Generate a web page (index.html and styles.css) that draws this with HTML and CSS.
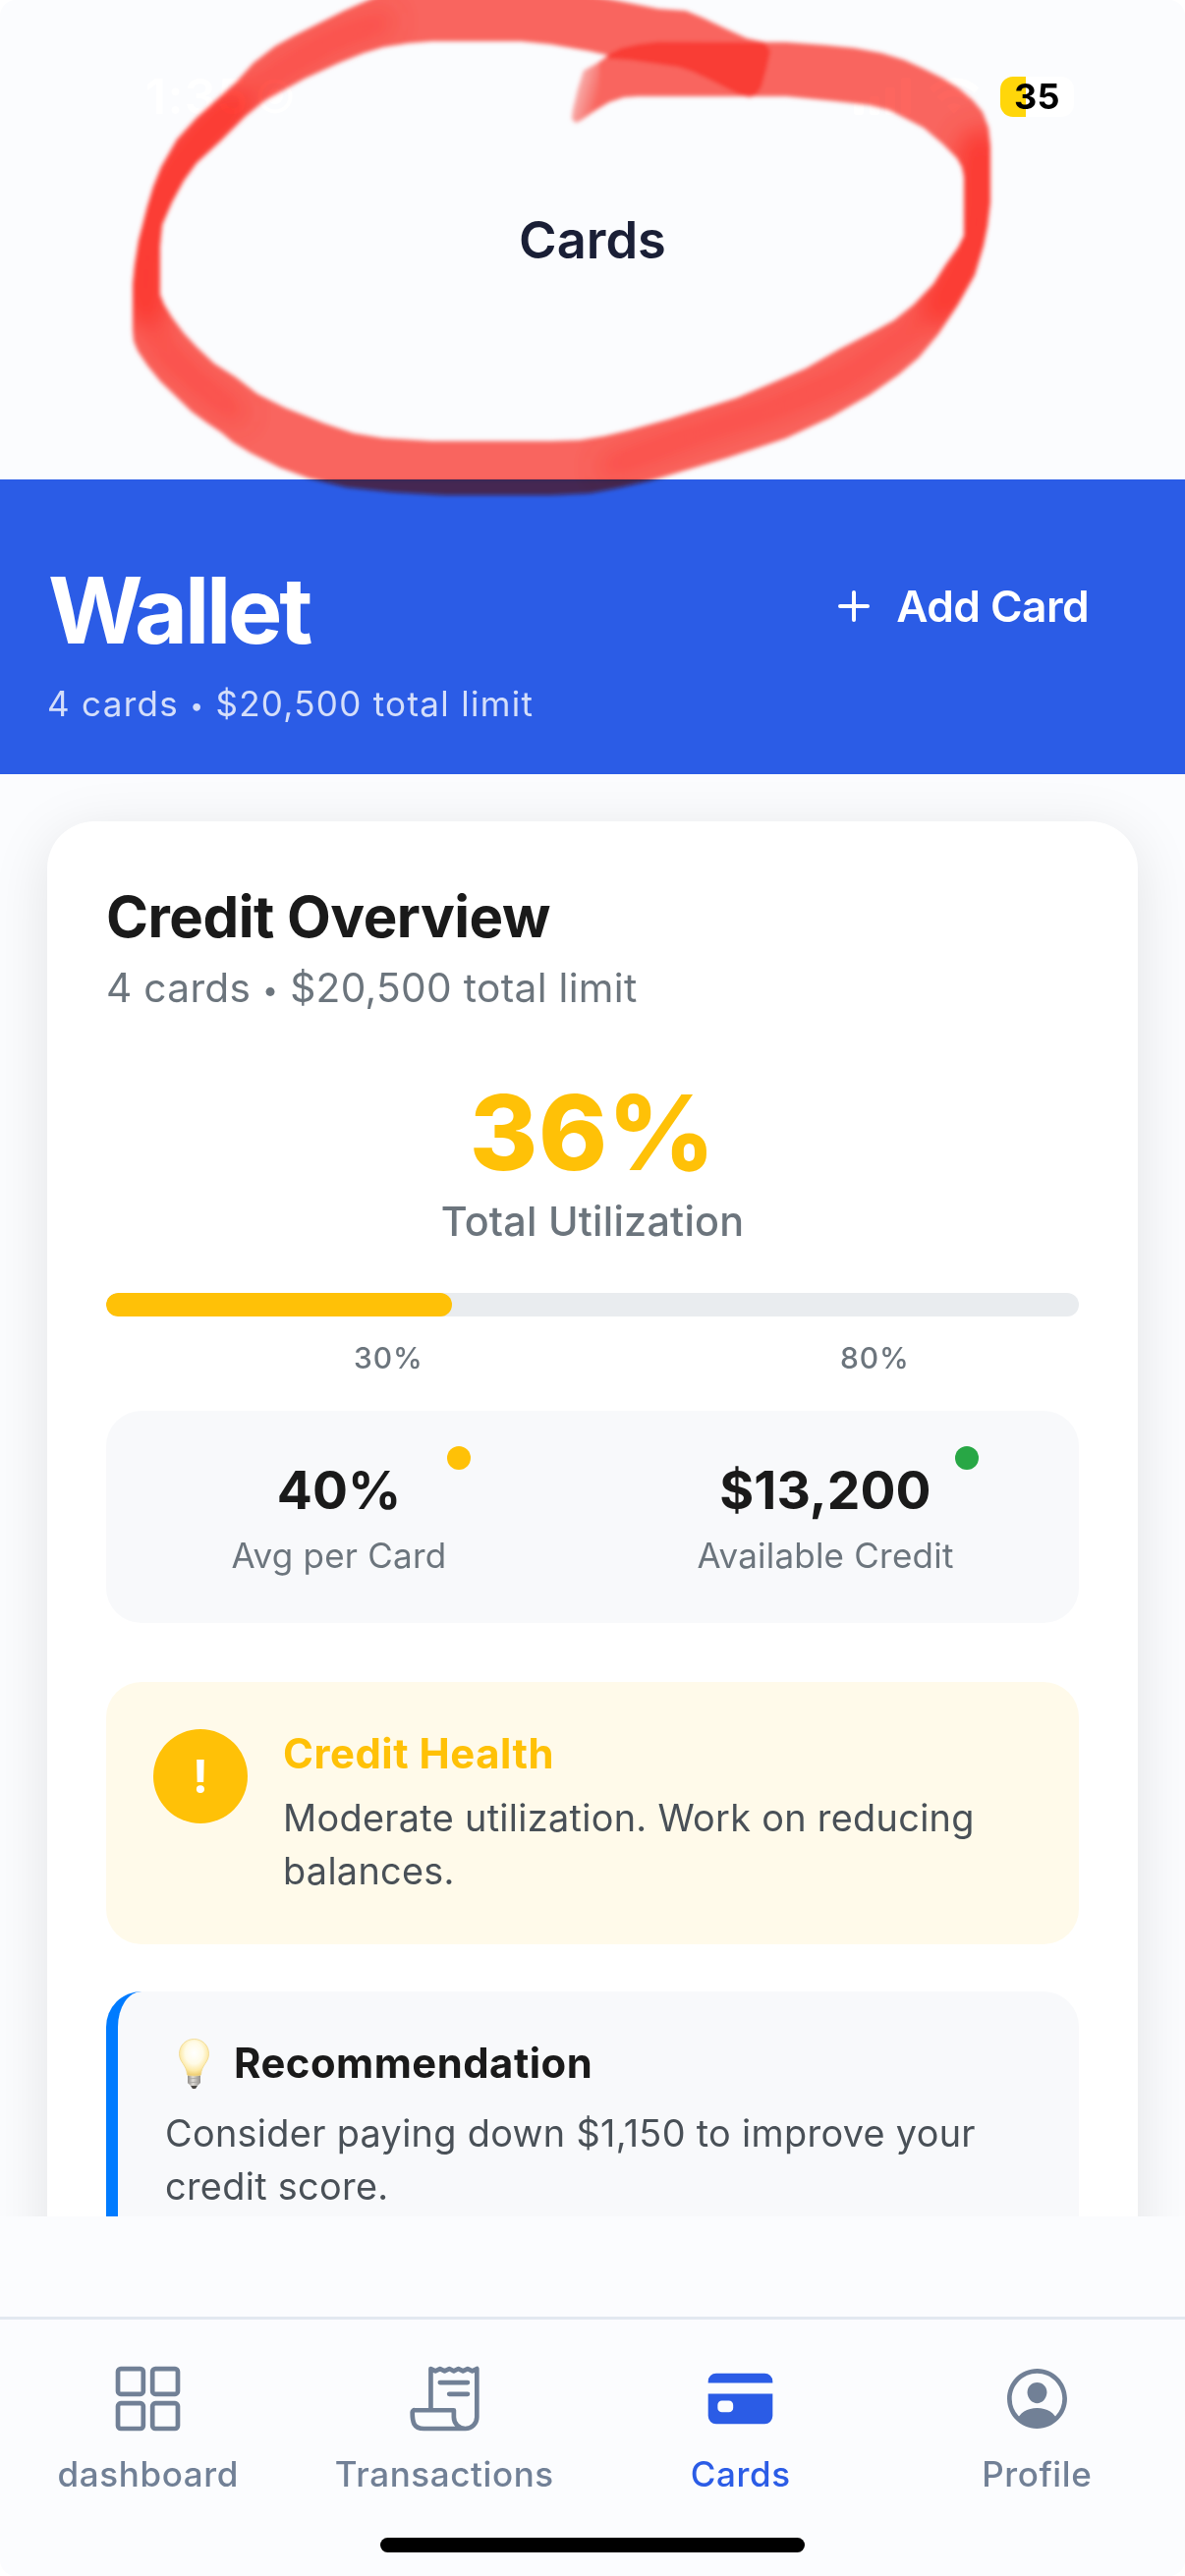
FILE: index.html
```html
<!DOCTYPE html>
<html lang="en">
<head>
<meta charset="utf-8">
<title>Wallet</title>
<link rel="stylesheet" href="styles.css">
</head>
<body>
<div class="screen">
  <header class="top">
    <div class="status">
      <div class="status-left">
        <span class="time">1:35</span>
        <svg class="focus" viewBox="0 0 36 36"><circle cx="18" cy="18" r="15.5" fill="none" stroke="#fff" stroke-width="4"/><circle cx="18" cy="18" r="8" fill="#fff"/></svg>
      </div>
      <div class="status-right">
        <svg class="signal" viewBox="0 0 58 38" fill="#fff"><rect x="0" y="25" width="10" height="13" rx="3"/><rect x="16" y="19" width="10" height="19" rx="3"/><rect x="32" y="10" width="10" height="28" rx="3"/><rect x="48" y="0" width="10" height="38" rx="3"/></svg>
        <svg class="wifi" viewBox="0 0 52 38" fill="none" stroke="#fff" stroke-width="7"><path d="M3 13a33 33 0 0 1 46 0M11 22a21 21 0 0 1 30 0"/><path d="M26 37l-7-8a10 10 0 0 1 14 0z" fill="#fff" stroke="none"/></svg>
        <div class="battery"><span class="battery-level">35</span></div>
      </div>
    </div>
    <h1 class="nav-title">Cards</h1>
  </header>

  <section class="wallet">
    <div>
      <h2 class="wallet-title">Wallet</h2>
      <p class="wallet-sub">4 cards <span class="bullet">•</span> $20,500 total limit</p>
    </div>
    <div class="add">
      <svg class="plus" viewBox="0 0 32 32" stroke="#fff" stroke-width="4" stroke-linecap="round"><path d="M16 2v28M2 16h28"/></svg>
      <span>Add Card</span>
    </div>
  </section>

  <main class="scroll">
    <section class="card">
      <h3 class="card-title">Credit Overview</h3>
      <p class="card-sub">4 cards <span class="bullet">•</span> $20,500 total limit</p>
      <div class="util">36%</div>
      <div class="util-label">Total Utilization</div>
      <div class="bar"><div class="bar-fill" style="width:35.6%"></div></div>
      <div class="marks"><span>30%</span><span>80%</span></div>

      <div class="stats">
        <div class="stat"><div class="stat-body"><i class="dot dot-warn"></i><div class="stat-value">40%</div><div class="stat-label">Avg per Card</div></div></div>
        <div class="stat"><div class="stat-body"><i class="dot dot-good"></i><div class="stat-value">$13,200</div><div class="stat-label">Available Credit</div></div></div>
      </div>

      <div class="health">
        <div class="health-icon">!</div>
        <div>
          <div class="health-title">Credit Health</div>
          <p class="copy health-copy">Moderate utilization. Work on reducing<br>balances.</p>
        </div>
      </div>

      <div class="rec">
        <div class="rec-title">
          <svg class="bulb" viewBox="0 0 58 51">
            <defs>
              <radialGradient id="glass" cx=".5" cy=".38" r=".6"><stop offset="0" stop-color="#fff"/><stop offset=".5" stop-color="#fffbe6"/><stop offset=".8" stop-color="#fdeaa8"/><stop offset="1" stop-color="#f0cf74"/></radialGradient>
              <linearGradient id="screw"><stop offset="0" stop-color="#8f8c88"/><stop offset=".4" stop-color="#dedbd6"/><stop offset="1" stop-color="#8f8c88"/></linearGradient>
            </defs>
            <path d="M23 37h13v8l-3 3h-7l-3-3z" fill="url(#screw)"/>
            <path d="M23 41l13-1M23 45l12-1" stroke="#a5a29e" stroke-width=".8"/>
            <path d="M26 48h7l-2 3h-3z" fill="#4b4845"/>
            <path d="M29.500 .5C21 .5 14.500 7 14.500 15.500c0 9 7.500 11 8 21.500 3 1.200 11 1.200 14 0 .5-10.500 8-12.500 8-21.500C44.500 7 38 .5 29.500 .5z" fill="url(#glass)" stroke="#efd78c" stroke-width=".8"/>
          </svg>
          <span>Recommendation</span>
        </div>
        <p class="copy rec-copy">Consider paying down $1,150 to improve your<br>credit score.</p>
      </div>
    </section>
  </main>

  <nav class="tabs">
    <div class="tab">
      <svg class="tab-icon" viewBox="0 0 512 512" fill="none" stroke="currentColor" stroke-width="32" stroke-linejoin="round"><rect x="48" y="48" width="176" height="176" rx="20"/><rect x="288" y="48" width="176" height="176" rx="20"/><rect x="48" y="288" width="176" height="176" rx="20"/><rect x="288" y="288" width="176" height="176" rx="20"/></svg>
      <span>dashboard</span>
    </div>
    <div class="tab">
      <svg class="tab-icon" viewBox="0 0 512 512" fill="none" stroke="currentColor" stroke-width="32" stroke-linejoin="round"><path d="M160 336V48l32 16 32-16 31.940 16 32.370-16L320 64l31.790-16 31.930 16L416 48l32.010 16L480 48v336a80 80 0 0 1-80 80 80 80 0 0 1-80-80v-48H48a15.860 15.860 0 0 0-16 16c0 64 6.740 112 80 112h288"/><path d="M224 144h192M288 224h128" stroke-linecap="round"/></svg>
      <span>Transactions</span>
    </div>
    <div class="tab tab-active">
      <svg class="tab-icon" viewBox="0 0 512 512" fill="currentColor"><path d="M32 376a56 56 0 0 0 56 56h336a56 56 0 0 0 56-56V222H32zm66-76a30 30 0 0 1 30-30h48a30 30 0 0 1 30 30v20a30 30 0 0 1-30 30h-48a30 30 0 0 1-30-30zM424 80H88a56 56 0 0 0-56 56v10h448v-10a56 56 0 0 0-56-56z"/></svg>
      <span>Cards</span>
    </div>
    <div class="tab">
      <svg class="tab-icon" viewBox="0 0 512 512" fill="currentColor"><path d="M258.900 48C141.920 46.420 46.420 141.920 48 258.900c1.560 112.190 92.910 203.540 205.100 205.100 117 1.600 212.480-93.900 210.880-210.880C462.440 140.910 371.090 49.560 258.900 48zm126.420 327.250a4 4 0 0 1-6.140-.32 124.270 124.270 0 0 0-32.350-29.590C321.370 329 289.110 320 256 320s-65.370 9-90.830 25.340a124.240 124.240 0 0 0-32.350 29.580 4 4 0 0 1-6.140.32A175.320 175.320 0 0 1 80 259c-1.630-97.310 78.220-178.760 175.570-179S432 158.810 432 256a175.320 175.320 0 0 1-46.680 119.250z"/><path d="M256 144c-19.720 0-37.550 7.390-50.220 20.820s-19 32-17.570 51.930C191.110 256 221.520 288 256 288s64.830-32 67.790-71.240c1.480-19.740-4.800-38.140-17.680-51.820C293.390 151.440 275.590 144 256 144z"/></svg>
      <span>Profile</span>
    </div>
  </nav>
  <div class="home"></div>

  <svg class="marker" viewBox="0 0 1206 520">
    <defs>
      <clipPath id="loop"><path d="M594 72L607 65 620 56 632 49 650 45 670 42.500H740L800 43 840 46 870 49 897 54 920 61 940 70 960 80 976 90 990 102 1000 114 1006 130 1008 150V205L1005 230 1001 250 992 280 975 310 955 340 935 364 915 381 885 402 845 425 800 446 740 466 700 478 663 489 627 497 600 502 560 504H453L400 501 353 496 315 487 285 476 255 461 237 450 225 440 210 430 195 419 163 388 150 372 140 357 136 347 135 335V290L137 270 141 245 150 210 156 190 164 170 180 142 200 120 240 84 258 64 280 47 300 36 320 26 350 11 384-4 420-14H540L580-8 625 0 670 9 698 11 715 18 738 29 760 39 778 43 784 52 780 70 775 88 770 96 763 99 752 96 720 80 705 73 690 68 665 64 640 61 600 52 560 45 530 42H440L415 44 390 48 370 54 345 64 310 80 270 102 250 118 225 143 200 166 187 184 175 206 165 229 163 250V300L167 310 175 323 187 339 200 353 218 370 240 384 262 401 290 415 330 431 360 441 390 446 440 449H560L590 448 615 444 640 438 680 427 750 405 790 388 820 375 855 355 890 337 910 326 930 310 950 289 962 270 975 252 981 240V180L979 170 974 161 960 147 940 130 905 112 885 107 850 103 800 98H650L635 99 620 104 605 113 592 122 586 125 582 121 583 112 588 91z"/></clipPath>
      <filter id="soft" x="-5%" y="-5%" width="110%" height="110%"><feGaussianBlur stdDeviation="2"/></filter>
      <filter id="bleed" x="-20%" y="-20%" width="140%" height="140%"><feGaussianBlur stdDeviation="13"/></filter>
      <linearGradient id="tail" gradientUnits="userSpaceOnUse" x1="584" y1="104" x2="606" y2="110"><stop offset="0" stop-color="#fbfcfe" stop-opacity=".5"/><stop offset="1" stop-color="#fbfcfe" stop-opacity="0"/></linearGradient>
    </defs>
    <g filter="url(#soft)">
      <g clip-path="url(#loop)">
        <rect x="100" y="-30" width="950" height="560" fill="#fd665e"/>
        <g fill="none" stroke="#ff3a30" stroke-linecap="round" stroke-linejoin="round" filter="url(#bleed)">
          <path stroke-width="48" d="M235 112L215 130 185 165 160 210 149 255 148 308"/>
          <path stroke-width="48" d="M998 155L996 180V230L980 275 960 308"/>
          <path stroke-width="26" opacity=".5" d="M220 125L285 72 340 40 390 22M975 285L930 335 860 385 790 415 700 445 620 475M148 300L165 355 200 388 240 420"/>
        </g>
        <path d="M612 59L632 49 650 45 670 42.500 778 43 784 52 780 70 775 88 770 96 763 99 752 96 720 80 705 73 690 68 640 61z" fill="#fd3a31" opacity=".92"/>
        <path d="M575 60h35v75h-35z" fill="url(#tail)"/>
      </g>
    </g>
  </svg>
  <svg class="marker-tint" viewBox="0 0 1206 520">
    <g filter="url(#soft)"><rect x="300" y="488" width="420" height="30" fill="#ff3a30" opacity=".12" clip-path="url(#loop)"/></g>
  </svg>
</div>
</body>
</html>
```
FILE: styles.css
```css
* { box-sizing: border-box; margin: 0; padding: 0; }

body {
  width: 1206px;
  height: 2622px;
  background: #fff;
  font-family: Inter, "Liberation Sans", sans-serif;
}

.screen {
  position: relative;
  display: flex;
  flex-direction: column;
  width: 1206px;
  height: 2622px;
  overflow: hidden;
  border-radius: 16px;
  background: #fbfcfe;
}

/* Status bar and navigation title */
.top { height: 488px; flex: none; }
.status {
  display: flex;
  align-items: center;
  justify-content: space-between;
  height: 177px;
  padding: 19px 113px 0 148px;
}
.status-left, .status-right { display: flex; align-items: center; }
.time {
  font-size: 50px;
  line-height: 60px;
  font-weight: 600;
  letter-spacing: 1.3px;
  color: #fff;
}
.focus { width: 36px; height: 36px; margin-left: 8px; }
.signal { width: 58px; height: 38px; }
.wifi { width: 52px; height: 38px; margin: 0 21px 0 18px; }
.battery {
  width: 75px;
  height: 41px;
  border-radius: 13px;
  background: linear-gradient(90deg, #ffd60a 26px, #fff 26px);
  text-align: center;
}
.battery-level {
  font-size: 36px;
  line-height: 41px;
  font-weight: 700;
  letter-spacing: .4px;
  color: #000;
}
.nav-title {
  font-size: 52.4px;
  line-height: 134px;
  font-weight: 600;
  text-align: center;
  color: #1a1f36;
}

/* Wallet banner */
.wallet {
  display: flex;
  justify-content: space-between;
  flex: none;
  height: 300px;
  padding: 83px 98px 0 49px;
  background: #2b5ce6;
  color: #fff;
}
.wallet-title {
  font-size: 93.1px;
  line-height: 100px;
  font-weight: 700;
  letter-spacing: -3.2px;
}
.wallet-sub {
  margin: 23px 0 0 -1px;
  font-size: 35px;
  line-height: 44px;
  letter-spacing: 1.3px;
  color: rgba(255, 255, 255, .8);
}
.bullet { font-size: .7em; line-height: 0; vertical-align: .08em; }
.add {
  display: flex;
  align-items: center;
  gap: 27px;
  height: 92px;
  font-size: 44.3px;
  font-weight: 600;
  letter-spacing: -.57px;
}
.plus { width: 32px; height: 32px; }

/* Credit overview */
.scroll { flex: none; height: 1468px; padding: 48px; overflow: hidden; }
.card {
  height: 1700px;
  padding: 60px;
  border-radius: 48px;
  background: #fff;
  box-shadow: 0 12px 60px rgba(0, 0, 0, .1);
}
.card-title {
  font-size: 58.2px;
  line-height: 74px;
  font-weight: 700;
  letter-spacing: -.5px;
  color: #1a1a1a;
}
.card-sub {
  margin-top: 11px;
  font-size: 40.7px;
  line-height: 50px;
  letter-spacing: .3px;
  color: #6c757d;
}
.util {
  margin-top: 64px;
  font-size: 106px;
  line-height: 116px;
  font-weight: 800;
  letter-spacing: .6px;
  text-align: center;
  color: #ffc107;
}
.util-label {
  margin-top: 7px;
  font-size: 41.3px;
  line-height: 50px;
  font-weight: 500;
  letter-spacing: .25px;
  text-align: center;
  color: #6c757d;
}
.bar {
  height: 24px;
  margin-top: 48px;
  border-radius: 12px;
  background: #e9ecef;
  overflow: hidden;
}
.bar-fill { height: 24px; border-radius: 12px; background: #ffc107; }
.marks {
  display: flex;
  gap: 426px;
  margin-top: 24px;
  padding-left: 252px;
  font-size: 30px;
  line-height: 36px;
  font-weight: 500;
  letter-spacing: .9px;
  color: #6c757d;
}
.marks span { width: 69px; }
.stats {
  display: grid;
  grid-template-columns: 1fr 1fr;
  height: 216px;
  margin-top: 36px;
  padding-top: 49px;
  border-radius: 36px;
  background: #f8f9fb;
}
.stat {
  display: flex;
  justify-content: center;
  padding-right: 21px;
  text-align: center;
}
.stat-body { position: relative; }
.dot {
  position: absolute;
  top: -13px;
  left: 100%;
  width: 24px;
  height: 24px;
  margin-left: 1px;
  border-radius: 50%;
}
.dot-warn { background: #ffc107; }
.dot-good { background: #28a745; }
.stat-value {
  font-size: 53.4px;
  line-height: 64px;
  font-weight: 700;
  letter-spacing: .1px;
  color: #1a1a1a;
}
.stat-label {
  margin-top: 12px;
  font-size: 35px;
  line-height: 44px;
  letter-spacing: .22px;
  color: #6c757d;
}

/* Notices */
.health {
  display: flex;
  gap: 36px;
  margin-top: 60px;
  padding: 48px;
  border-radius: 36px;
  background: #fffaea;
}
.health-icon {
  width: 96px;
  height: 96px;
  border-radius: 50%;
  background: #ffc107;
  font-size: 47px;
  line-height: 96px;
  font-weight: 700;
  text-align: center;
  color: #fff;
}
.health-title {
  font-size: 41.8px;
  line-height: 50px;
  font-weight: 650;
  letter-spacing: .55px;
  color: #ffc107;
}
.copy { font-size: 37.8px; line-height: 54px; color: #495057; }
.health-copy { margin-top: 13px; letter-spacing: .32px; }
.rec {
  height: 320px;
  margin-top: 48px;
  padding: 48px;
  border-left: 12px solid #007bff;
  border-radius: 36px;
  background: #f8f9fb;
}
.rec-title {
  display: flex;
  align-items: center;
  gap: 12px;
  font-size: 41.8px;
  line-height: 51px;
  font-weight: 650;
  letter-spacing: .5px;
  color: #1a1a1a;
}
.bulb { width: 58px; height: 51px; }
.rec-copy { margin-top: 18px; letter-spacing: .33px; }

/* Tab bar */
.tabs {
  display: grid;
  grid-template-columns: repeat(4, 1fr);
  flex: none;
  height: 181px;
  margin-top: 102px;
  padding-top: 43px;
  border-top: 3px solid #e2e8f0;
}
.tab {
  display: flex;
  flex-direction: column;
  align-items: center;
  gap: 18px;
  font-size: 35px;
  line-height: 42px;
  font-weight: 500;
  letter-spacing: .6px;
  color: #718096;
}
.tab-active { color: #2b5ce6; }
.tab-icon { width: 75px; height: 75px; }
.home {
  flex: none;
  width: 432px;
  height: 15px;
  margin: 44px auto 0;
  border-radius: 8px;
  background: #000;
}

/* Hand-drawn highlighter loop over the header */
.marker, .marker-tint {
  position: absolute;
  top: 0;
  left: 0;
  width: 1206px;
  height: 520px;
}
.marker { mix-blend-mode: multiply; }
```
